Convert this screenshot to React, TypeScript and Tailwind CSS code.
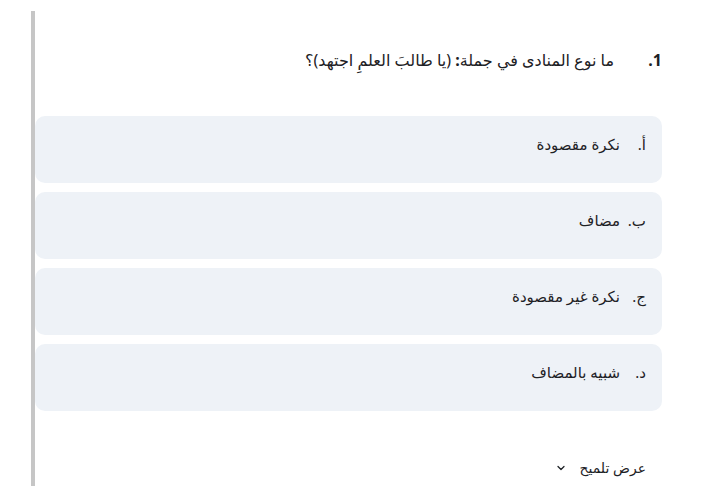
import { ChevronDown } from "lucide-react"

const options = [
  { label: "أ.", text: "نكرة مقصودة" },
  { label: "ب.", text: "مضاف" },
  { label: "ج.", text: "نكرة غير مقصودة" },
  { label: "د.", text: "شبيه بالمضاف" },
]

export default function App() {
  return (
    <div
      dir="rtl"
      className="bg-white w-[709px] h-[494px] pr-[47px] pl-[31px] pt-[11px] text-[#1d2125]"
      style={{ fontFamily: '"Noto Sans", "DejaVu Sans", sans-serif' }}
    >
      <div className="flex h-[475px]">
        <div className="flex-1 flex flex-col">
          <div className="flex items-center h-[50px] mt-[24px] text-[16px]">
            <span className="font-bold w-[48px]">1.</span>
            <span>
              ما نوع المنادى في جملة<b>:</b> (يا طالبَ العلمِ اجتهد)؟
            </span>
          </div>
          <div className="flex flex-col gap-[9px] mt-[31px]">
            {options.map((o) => (
              <div
                key={o.label}
                className="h-[67px] bg-[#eef2f7] rounded-[10px] pr-4 pt-[17px] flex text-[15px]"
              >
                <span className="w-[26px]">{o.label}</span>
                <span>{o.text}</span>
              </div>
            ))}
          </div>
          <div className="flex items-center mt-[46px] pr-4 text-[14px] gap-[12px]">
            <span>عرض تلميح</span>
            <ChevronDown className="w-3 h-3" strokeWidth={2.5} />
          </div>
        </div>
        <div className="w-1 bg-[#c6c6c6] h-full" />
      </div>
    </div>
  )
}
